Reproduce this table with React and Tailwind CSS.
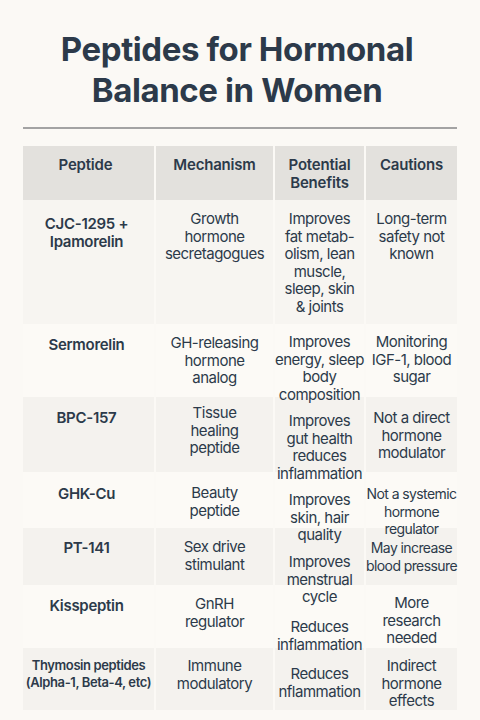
import React from 'react';

const HEAD = ['Peptide', 'Mechanism', 'Potential\nBenefits', 'Cautions'];

// each row: height, background, cells [{ text, pt }]
const ROWS = [
  {
    h: 'h-[124px]', bg: 'bg-[#f7f5f1]',
    cells: [
      { t: 'CJC-1295 +\nIpamorelin', pt: 'pt-[15px]' },
      { t: 'Growth\nhormone\nsecretagogues', pt: 'pt-[10px]' },
      { t: 'Improves\nfat metab-\nolism, lean\nmuscle,\nsleep, skin\n& joints', pt: 'pt-[10px]' },
      { t: 'Long-term\nsafety not\nknown', pt: 'pt-[10px]' },
    ],
  },
  {
    h: 'h-[73px]', bg: 'bg-[#fcfaf6]',
    cells: [
      { t: 'Sermorelin', pt: 'pt-[12px]' },
      { t: 'GH-releasing\nhormone\nanalog', pt: 'pt-[10px]' },
      { t: 'Improves\nenergy, sleep\nbody\ncomposition', pt: 'pt-[9px]' },
      { t: 'Monitoring\nIGF-1, blood\nsugar', pt: 'pt-[9px]' },
    ],
  },
  {
    h: 'h-[75px]', bg: 'bg-[#f4f2ee]',
    cells: [
      { t: 'BPC-157', pt: 'pt-[12px]' },
      { t: 'Tissue\nhealing\npeptide', pt: 'pt-[7px]' },
      { t: 'Improves\ngut health\nreduces\ninflammation', pt: 'pt-[15px]' },
      { t: 'Not a direct\nhormone\nmodulator', pt: 'pt-[12px]' },
    ],
  },
  {
    h: 'h-[56px]', bg: 'bg-[#fcfaf6]',
    cells: [
      { t: 'GHK-Cu', pt: 'pt-[13px]' },
      { t: 'Beauty\npeptide', pt: 'pt-[12px]' },
      { t: 'Improves\nskin, hair\nquality', pt: 'pt-[19px]' },
      { t: 'Not a systemic\nhormone\nregulator', pt: 'pt-[13px]', narrow: true },
    ],
  },
  {
    h: 'h-[57px]', bg: 'bg-[#f4f2ee]',
    cells: [
      { t: 'PT-141', pt: 'pt-[11px]' },
      { t: 'Sex drive\nstimulant', pt: 'pt-[10px]' },
      { t: 'Improves\nmenstrual\ncycle', pt: 'pt-[25px]' },
      { t: 'May increase\nblood pressure', pt: 'pt-[11px]', narrow: true },
    ],
  },
  {
    h: 'h-[63px]', bg: 'bg-[#fcfaf6]',
    cells: [
      { t: 'Kisspeptin', pt: 'pt-[12px]' },
      { t: 'GnRH\nregulator', pt: 'pt-[10px]' },
      { t: 'Reduces\ninflammation', pt: 'pt-[33px]' },
      { t: 'More\nresearch\nneeded', pt: 'pt-[9px]' },
    ],
  },
  {
    h: 'h-[58px]', bg: 'bg-[#f4f2ee]',
    cells: [
      { t: 'Thymosin peptides\n(Alpha-1, Beta-4, etc)', pt: 'pt-[9px]', small: true },
      { t: 'Immune\nmodulatory', pt: 'pt-[9px]' },
      { t: 'Reduces\nnflammation', pt: 'pt-[17px]' },
      { t: 'Indirect\nhormone\neffects', pt: 'pt-[9px]' },
    ],
  },
];

const COLS = 'grid grid-cols-[131px_117px_89px_91px] gap-x-[2px]';

function Lines({ text }) {
  return text.split('\n').map((l, i) => (
    <div key={i} className="relative z-10 whitespace-nowrap">{l}</div>
  ));
}

export default function App() {
  return (
    <div
      className="w-[480px] h-[720px] bg-[#fbf9f5] text-[#2c3a4a] overflow-hidden"
      style={{ fontFamily: 'Inter, "Noto Sans", sans-serif' }}
    >
      <h1 className="pt-[29px] pr-[6px] text-center text-[33px] leading-[41px] font-bold tracking-[-0.4px]">
        Peptides for Hormonal
        <br />
        Balance in Women
      </h1>

      <div className="mx-[23px] mt-[16px] h-[2px] bg-[#a3a3a3]" />

      <div className="mx-[23px] mt-[17px]">
        {/* header */}
        <div className={`${COLS} h-[54px]`}>
          {HEAD.map((h, i) => (
            <div
              key={h}
              className={`bg-[#e3e1dd] pt-[10px] text-center text-[15px] leading-[18px] font-semibold tracking-[-0.2px] ${i === 0 ? 'pr-[6px]' : ''}`}
            >
              <Lines text={h} />
            </div>
          ))}
        </div>

        {ROWS.map((row, ri) => (
          <div key={ri} className={`${COLS} ${row.h}`}>
            {row.cells.map((c, ci) => {
              let cls = 'text-[15px] leading-[17.6px] tracking-[-0.5px]';
              if (ci === 0) cls = 'text-[15px] leading-[18px] font-semibold tracking-[-0.3px] pr-[4px]';
              if (c.small) cls = 'text-[13px] leading-[17px] font-semibold tracking-[-0.4px]';
              if (c.narrow) cls = 'text-[14px] leading-[17.5px] tracking-[-0.6px]';
              return (
                <div
                  key={ci}
                  className={`${row.bg} ${c.pt} ${cls} flex flex-col items-center text-center`}
                >
                  <Lines text={c.t} />
                </div>
              );
            })}
          </div>
        ))}
      </div>
    </div>
  );
}
